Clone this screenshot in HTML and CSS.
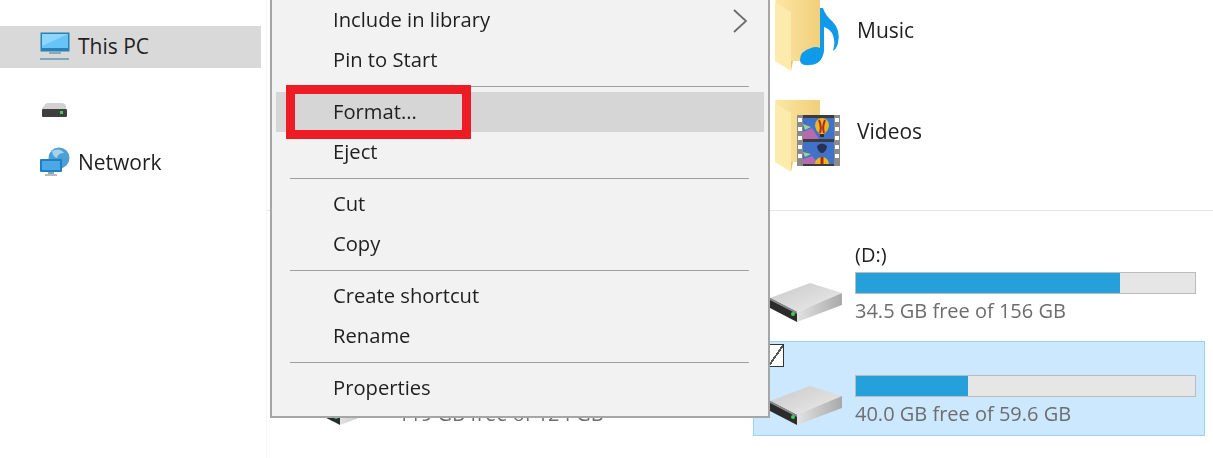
FILE: index.html
```html
<!DOCTYPE html>
<html lang="en">
<head>
    <meta charset="UTF-8">
    <meta name="viewport" content="width=device-width, initial-scale=1.0">
    <title>This PC</title>
    <link rel="stylesheet" href="styles.css">
</head>
<body>
    <!-- shared icons -->
    <svg class="icon-defs" aria-hidden="true">
        <defs>
            <linearGradient id="folder-back" x1="0" y1="0" x2="1" y2="0">
                <stop offset="0" stop-color="#fbe7a4"/>
                <stop offset="1" stop-color="#f1cf7b"/>
            </linearGradient>
            <linearGradient id="drive-top" x1="0" y1="0" x2="1" y2="1">
                <stop offset="0" stop-color="#c9c9c9"/>
                <stop offset="1" stop-color="#ececec"/>
            </linearGradient>
            <linearGradient id="drive-side" x1="0" y1="0" x2="1" y2="0">
                <stop offset="0" stop-color="#e2e2e2"/>
                <stop offset="1" stop-color="#a9a9a9"/>
            </linearGradient>
        </defs>
        <symbol id="folder" viewBox="0 0 70 72">
            <path d="M0 0H45V62H16Z" fill="url(#folder-back)"/>
            <path d="M0 3L16 13V72L0 62Z" fill="#fdeaad"/>
            <path d="M16 13V72L18 62H16Z" fill="#e9c56c"/>
        </symbol>
        <symbol id="drive" viewBox="0 0 80 42">
            <path d="M8 16L48 1L80 11L35 30Z" fill="url(#drive-top)"/>
            <path d="M35 30L80 11V23L35 40Z" fill="url(#drive-side)"/>
            <path d="M8 16L35 30V40L8 26Z" fill="#2b2b2b"/>
            <path d="M8 16L35 30V32L8 18Z" fill="#8c8c8c"/>
            <circle cx="31" cy="32" r="2" fill="#3ecf5a"/>
        </symbol>
    </svg>

    <div class="page">
        <nav class="sidebar">
            <div class="nav-row selected">
                <svg class="nav-icon" viewBox="0 0 30 30">
                    <rect x="0.5" y="0.5" width="29" height="19" fill="#2581b8"/>
                    <path d="M2 2H28V16H2Z" fill="#68c4f6"/>
                    <path d="M2 2H28L2 14Z" fill="#8ed6fb"/>
                    <rect x="9" y="20" width="12" height="2" fill="#8fa7b5"/>
                    <rect x="0" y="26" width="29" height="2" fill="#7ea6bf"/>
                </svg>
                <span class="nav-label">This PC</span>
            </div>
            <div class="nav-row drive-row">
                <svg class="nav-icon" viewBox="0 0 30 30">
                    <path d="M4 11Q5 8 8 8H22Q25 8 26 11V14H2V13Z" fill="#d2d2d2"/>
                    <rect x="2" y="14" width="25" height="8" rx="1" fill="#3f3f3f"/>
                    <rect x="20" y="16" width="3" height="3" fill="#3ecf5a"/>
                </svg>
            </div>
            <div class="nav-row network-row">
                <svg class="nav-icon" viewBox="0 0 30 30">
                    <circle cx="19" cy="11" r="10.5" fill="#4e9fd6"/>
                    <path d="M12 4Q20 0 24 6Q18 6 17 11Q13 10 12 4Z" fill="#a5d3ee"/>
                    <rect x="0" y="12" width="22" height="13" rx="1" fill="#1f7fc0"/>
                    <rect x="2" y="14" width="18" height="9" fill="#4aa8e6"/>
                    <rect x="8" y="25" width="6" height="2" fill="#8fa7b5"/>
                    <rect x="5" y="27" width="12" height="2" fill="#b0bec7"/>
                </svg>
                <span>Network</span>
            </div>
        </nav>

        <main class="content">
            <section class="folders">
                <div class="folder-item">
                    <svg class="folder-icon" viewBox="0 0 70 72">
                        <use href="#folder" width="70" height="72"/>
                        <path d="M45 9L48 9Q50 16 57 22Q66 31 63 44Q62 49 58 52Q61 42 57 34Q53 29 49 28V52Q47 66 34 66Q25 67 25 61Q25 52 36 49Q41 47 45 49Z" fill="#0f9aea"/>
                    </svg>
                    <span class="folder-name">Music</span>
                </div>
                <div class="folder-item">
                    <svg class="folder-icon" viewBox="0 0 70 72">
                        <use href="#folder" width="70" height="72"/>
                        <rect x="22" y="15" width="43" height="51" fill="#3c3c3c"/>
                        <path d="M22 15H28V66H22ZM59 15H65V66H59Z" fill="#8a8a8a"/>
                        <path d="M23 18h4v4h-4zM23 27h4v4h-4zM23 36h4v4h-4zM23 45h4v4h-4zM23 54h4v4h-4zM60 18h4v4h-4zM60 27h4v4h-4zM60 36h4v4h-4zM60 45h4v4h-4zM60 54h4v4h-4z" fill="#fff"/>
                        <rect x="28" y="18" width="31" height="21" fill="#3f72c8"/>
                        <rect x="28" y="42" width="31" height="22" fill="#3f72c8"/>
                        <path d="M28 32L37 28L44 39H28ZM28 59L37 56L44 64H28Z" fill="#b56bb0"/>
                        <path d="M28 24L36 27L30 30ZM28 52L36 54L30 57Z" fill="#9fd18a"/>
                        <!-- balloons -->
                        <path d="M40 25A7 7 0 0 1 54 25Q54 30 49 34H45Q40 30 40 25Z" fill="#e8b81f"/>
                        <path d="M44 20Q47 27 45 33M50 20Q47 27 49 33" fill="none" stroke="#b3261e" stroke-width="2"/>
                        <rect x="45" y="34" width="4" height="3" fill="#3b2a20"/>
                        <path d="M42 46Q47 41 52 46Q52 50 48 53H46Q42 50 42 46Z" fill="#26324f"/>
                        <path d="M40 64A7 7 0 0 1 54 64Z" fill="#e8b81f"/>
                        <path d="M47 57V64" stroke="#b3261e" stroke-width="3"/>
                    </svg>
                    <span class="folder-name">Videos</span>
                </div>
            </section>

            <section class="drives">
                <div class="drive-tile"></div>
                <div class="drive-tile">
                    <svg class="drive-icon"><use href="#drive" width="80" height="42"/></svg>
                    <div class="drive-info">
                        <div class="drive-label">(D:)</div>
                        <div class="bar"><div class="bar-fill" style="width: 78%"></div></div>
                        <div class="drive-free">34.5 GB free of 156 GB</div>
                    </div>
                </div>
                <div class="drive-tile">
                    <svg class="drive-icon"><use href="#drive" width="80" height="42"/></svg>
                    <div class="drive-info">
                        <div class="drive-label">&nbsp;</div>
                        <div class="bar"><div class="bar-fill" style="width: 33%"></div></div>
                        <div class="drive-free">119 GB free of 124 GB</div>
                    </div>
                </div>
                <div class="drive-tile selected-tile">
                    <span class="tile-check"></span>
                    <svg class="drive-icon"><use href="#drive" width="80" height="42"/></svg>
                    <div class="drive-info">
                        <div class="drive-label">&nbsp;</div>
                        <div class="bar"><div class="bar-fill" style="width: 33%"></div></div>
                        <div class="drive-free">40.0 GB free of 59.6 GB</div>
                    </div>
                </div>
            </section>
        </main>
    </div>

    <!-- context menu sits over the window -->
    <div class="context-menu">
        <div class="menu-item">Include in library
            <svg class="chevron" viewBox="0 0 14 24"><path d="M1 1L13 12L1 23" fill="none" stroke="#6b6b6b" stroke-width="1.8"/></svg>
        </div>
        <div class="menu-item">Pin to Start</div>
        <div class="menu-sep"></div>
        <div class="menu-item hover">Format...<span class="red-box"></span></div>
        <div class="menu-item">Eject</div>
        <div class="menu-sep"></div>
        <div class="menu-item">Cut</div>
        <div class="menu-item">Copy</div>
        <div class="menu-sep"></div>
        <div class="menu-item">Create shortcut</div>
        <div class="menu-item">Rename</div>
        <div class="menu-sep"></div>
        <div class="menu-item">Properties</div>
    </div>
</body>
</html>
```

FILE: styles.css
```css
body {
    margin: 0;
    height: 458px;
    overflow: hidden;
    background-color: white;
    color: #1f1f1f;
    font-family: "Open Sans", "Noto Sans", sans-serif;
    font-size: 21px;
    filter: blur(0.45px);
    position: relative;
}

.icon-defs {
    position: absolute;
    width: 0;
    height: 0;
}

.page {
    display: flex;
    height: 458px;
}

.sidebar {
    box-sizing: border-box;
    width: 266px;
    flex: none;
    padding-top: 26px;
    padding-right: 5px;
}

.nav-row {
    display: flex;
    align-items: center;
    gap: 8px;
    height: 42px;
    padding-left: 40px;
}

.nav-row.selected {
    background-color: #d9d9d9;
}

.nav-label {
    margin-bottom: 2px;
}

.drive-row {
    margin-top: 21px;
}

.network-row {
    margin-top: 10px;
}

.nav-icon {
    width: 30px;
    height: 30px;
    flex: none;
}

.content {
    flex: 1;
    min-width: 0;
    border-left: 1px solid #f6f6f6;
}

.folders {
    box-sizing: border-box;
    height: 211px;
    padding-left: 508px;
    border-bottom: 1px solid #e4e4e4;
    display: flex;
    flex-direction: column;
    gap: 29px;
}

.folder-item {
    display: flex;
    align-items: center;
    gap: 12px;
    height: 72px;
    flex: none;
}

.folder-item:first-child {
    margin-top: -1px;
}

.folder-icon {
    width: 70px;
    height: 72px;
    flex: none;
}

.folder-name {
    margin-bottom: 10px;
}

.drives {
    display: grid;
    grid-template-columns: 457px 452px;
    gap: 8px 0;
    padding: 27px 0 0 29px;
}

.drive-tile {
    box-sizing: border-box;
    position: relative;
    display: flex;
    align-items: flex-end;
    gap: 13px;
    height: 95px;
    padding: 4px 8px 0 8px;
    border: 1px solid transparent;
    font-size: 20px;
}

.selected-tile {
    background-color: #cce8ff;
    border-color: #99d1ff;
}

.tile-check {
    position: absolute;
    left: 14px;
    top: 2px;
    width: 16px;
    height: 23px;
    box-sizing: border-box;
    border: 1px solid #333;
    background: white linear-gradient(125deg, transparent 46%, #555 46%, #555 54%, transparent 54%);
}

.drive-icon {
    width: 80px;
    height: 42px;
    flex: none;
    margin-bottom: 8px;
}

.drive-info {
    flex: 1;
    align-self: flex-start;
}

.drive-label {
    height: 24px;
    line-height: 24px;
}

.bar {
    box-sizing: border-box;
    height: 22px;
    margin-top: 5px;
    border: 1px solid #bcbcbc;
    background-color: #e6e6e6;
}

.bar-fill {
    height: 100%;
    background-color: #26a0da;
}

.drive-free {
    height: 24px;
    line-height: 24px;
    margin-top: 5px;
    color: #6d6d6d;
}

.context-menu {
    position: absolute;
    left: 270px;
    top: 0;
    box-sizing: border-box;
    width: 500px;
    height: 418px;
    padding: 0 4px 9px 4px;
    background-color: #f2f2f2;
    border: 2px solid #a6a6a6;
    border-top: none;
    font-size: 20.2px;
}

.menu-item {
    position: relative;
    box-sizing: border-box;
    display: flex;
    align-items: center;
    height: 40px;
    padding: 0 0 2px 57px;
}

.menu-item.hover {
    background-color: #d6d6d6;
}

.chevron {
    position: absolute;
    right: 17px;
    top: 9px;
    width: 14px;
    height: 24px;
}

.menu-sep {
    height: 1px;
    margin: 6px 15px 5px 14px;
    background-color: #a0a0a0;
}

.red-box {
    position: absolute;
    left: 10px;
    top: -7px;
    box-sizing: border-box;
    width: 185px;
    height: 54px;
    border: 9px solid #ed1c24;
}
```
